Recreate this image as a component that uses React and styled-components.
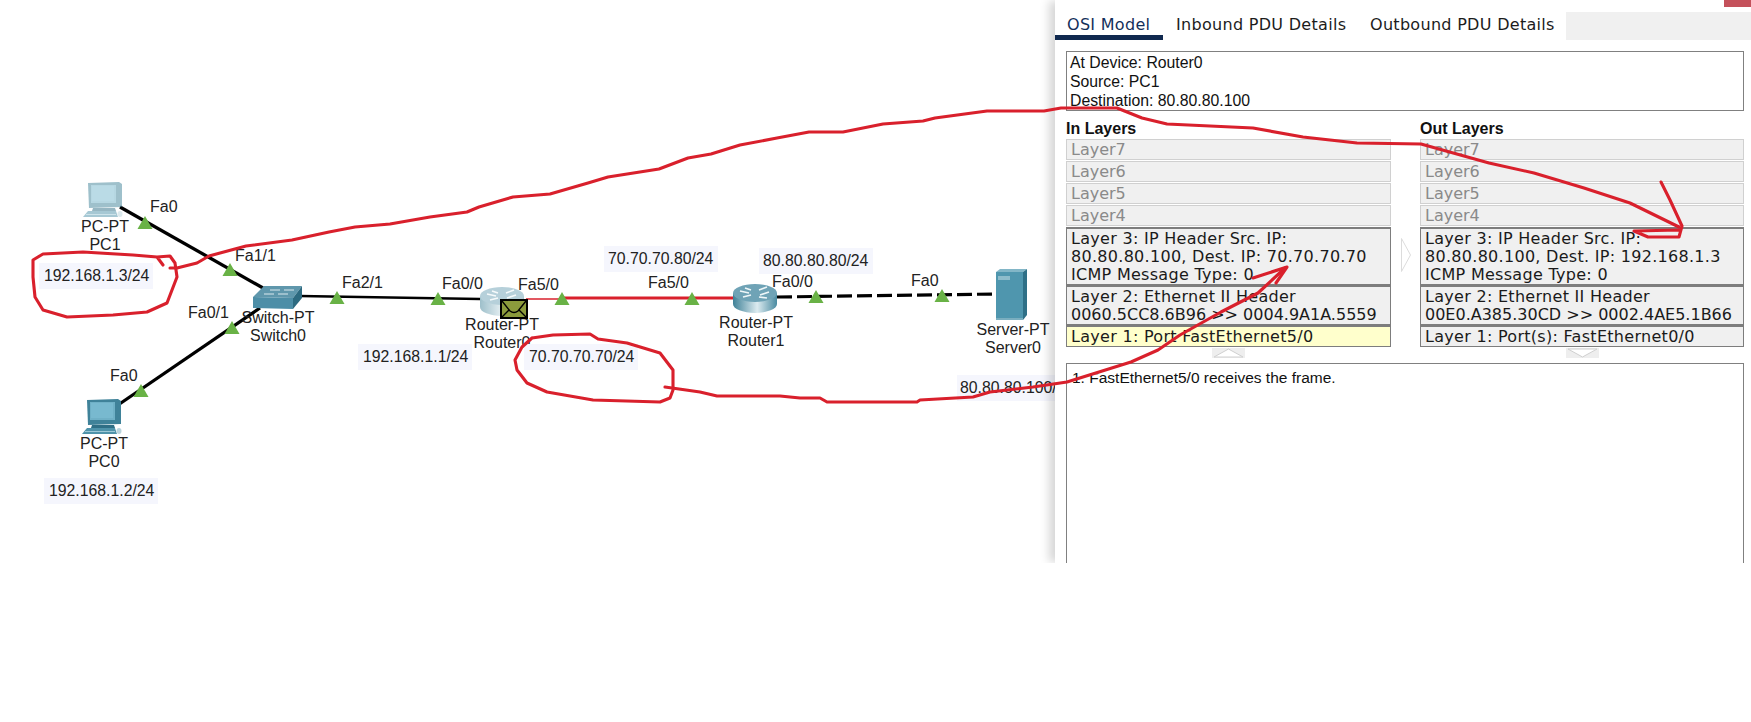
import React from "react";
import styled, { createGlobalStyle } from "styled-components";

const GlobalStyle = createGlobalStyle`
  html, body {
    margin: 0;
    padding: 0;
    background: #fff;
    font-family: "Liberation Sans", Arial, sans-serif;
  }
`;

const Page = styled.div`
  position: relative;
  display: flex;
  width: 1751px;
  height: 722px;
  overflow: hidden;
  background: #fff;
`;

/* ---------- topology canvas ---------- */

const Canvas = styled.section`
  position: relative;
  flex: 0 0 1055px;
  height: 563px;
  overflow: hidden;
  font-size: 16px;
  line-height: 18px;
  color: #222;
`;

const Wires = styled.svg`
  position: absolute;
  left: 0;
  top: 0;
  width: 1055px;
  height: 563px;
`;

const DeviceIcon = styled.svg`
  position: absolute;
  left: ${(p) => p.$x}px;
  top: ${(p) => p.$y}px;
  opacity: ${(p) => (p.$faded ? 0.5 : 1)};
`;

const Caption = styled.div`
  position: absolute;
  left: ${(p) => p.$x}px;
  top: ${(p) => p.$y}px;
  transform: translateX(-50%);
  text-align: center;
  white-space: nowrap;
`;

const PortLabel = styled.span`
  position: absolute;
  left: ${(p) => p.$x}px;
  top: ${(p) => p.$y - 9}px;
  white-space: nowrap;
`;

const AddressTag = styled.span`
  position: absolute;
  left: ${(p) => p.$x}px;
  top: ${(p) => p.$y}px;
  width: 114px;
  height: 26px;
  box-sizing: border-box;
  padding-left: ${(p) => p.$pad}px;
  font-size: 15.8px;
  line-height: 26px;
  background: #f5f6fd;
  white-space: nowrap;
`;

/* ---------- PDU panel ---------- */

const Panel = styled.section`
  position: relative;
  z-index: 1;
  flex: 0 0 696px;
  height: 563px;
  overflow: hidden;
  background: #fff;
  box-shadow: -7px 0 9px -1px rgba(0, 0, 0, 0.16);
  clip-path: inset(0 0 0 -20px);
`;

const TopStrip = styled.div`
  display: flex;
  justify-content: flex-end;
  height: 12px;
`;

const CloseCorner = styled.div`
  width: 27px;
  height: 7px;
  background: #c4515b;
`;

const TabBar = styled.div`
  display: flex;
  height: 28px;
  font-family: "DejaVu Sans", sans-serif;
  font-size: 16px;
  letter-spacing: 0.3px;
`;

const Tab = styled.div`
  box-sizing: border-box;
  flex: 0 0 ${(p) => p.$width}px;
  padding-left: ${(p) => p.$pad}px;
  line-height: 26px;
  white-space: nowrap;
  color: ${(p) => (p.$active ? "#14305a" : "#1c1c1c")};
  border-bottom: 5px solid ${(p) => (p.$active ? "#10294f" : "transparent")};
`;

const TabFiller = styled.div`
  flex: 1;
  background: #f0f0f0;
`;

const InfoBox = styled.div`
  box-sizing: border-box;
  height: 60px;
  margin: 11px 7px 0 11px;
  padding: 1px 3px;
  border: 1px solid #808080;
  font-size: 15.8px;
  line-height: 19px;
  color: #111;
`;

const LayerGrid = styled.div`
  display: grid;
  grid-template-columns: 325px 29px 324px;
  margin: 8px 7px 0 11px;
`;

const LayerColumn = styled.div`
  display: flex;
  flex-direction: column;
`;

const ColumnTitle = styled.h3`
  margin: 0;
  font-size: 16px;
  line-height: 20px;
  font-weight: bold;
  color: #111;
`;

const IdleLayer = styled.div`
  box-sizing: border-box;
  height: 21px;
  margin-bottom: 1px;
  padding-left: 4px;
  border: 1px solid #d0d0d0;
  background: #f0f0f0;
  font-family: "DejaVu Sans", sans-serif;
  font-size: 16px;
  line-height: 19px;
  color: #8a8a8a;

  &:nth-of-type(5) {
    margin-bottom: 0;
  }
`;

const ActiveLayer = styled.div`
  box-sizing: border-box;
  height: ${(p) => p.$height}px;
  padding: 1px 0 0 4px;
  border: 1px solid #7d7d7d;
  border-top-width: 2px;
  background: ${(p) => (p.$current ? "#ffffcc" : "#f0f0f0")};
  font-family: "DejaVu Sans", sans-serif;
  font-size: 16px;
  line-height: 18px;
  letter-spacing: 0.29px;
  color: #1a1a1a;
  white-space: nowrap;
`;

const HexLine = styled.span`
  letter-spacing: 0;
`;

const Chevron = styled.svg`
  display: block;
  margin: 119px 0 0 10px;
`;

const Toggle = styled.svg`
  display: block;
  margin: 1px auto 0;
`;

const LogBox = styled.div`
  box-sizing: border-box;
  height: 201px;
  margin: 5px 7px 0 11px;
  padding: 4px 5px;
  border: 1px solid #808080;
  border-bottom: 0;
  font-size: 15.5px;
  line-height: 19px;
  color: #111;
`;

/* ---------- hand drawn annotations ---------- */

const Scribble = styled.svg`
  position: absolute;
  left: 0;
  top: 0;
  z-index: 2;
  width: 1751px;
  height: 722px;
  pointer-events: none;
`;

const ports = [
  [145, 223],
  [230, 270],
  [232, 328],
  [141, 391],
  [337, 298],
  [438, 299],
  [562, 299],
  [692, 299],
  [816, 297],
  [942, 296],
];

const portLabels = [
  ["Fa0", 150, 207],
  ["Fa1/1", 235, 256],
  ["Fa0/1", 188, 313],
  ["Fa0", 110, 376],
  ["Fa2/1", 342, 283],
  ["Fa0/0", 442, 284],
  ["Fa5/0", 518, 285],
  ["Fa5/0", 648, 283],
  ["Fa0/0", 772, 282],
  ["Fa0", 911, 281],
];

const addresses = [
  ["192.168.1.3/24", 39, 263, 5],
  ["192.168.1.2/24", 44, 478, 5],
  ["192.168.1.1/24", 358, 344, 5],
  ["70.70.70.70/24", 524, 344, 5],
  ["70.70.70.80/24", 604, 246, 4],
  ["80.80.80.80/24", 759, 248, 4],
  ["80.80.80.100/", 957, 375, 3],
];

const captions = [
  ["PC-PT", "PC1", 105, 218],
  ["PC-PT", "PC0", 104, 435],
  ["Switch-PT", "Switch0", 278, 309],
  ["Router-PT", "Router0", 502, 316],
  ["Router-PT", "Router1", 756, 314],
  ["Server-PT", "Server0", 1013, 321],
];

const scribbles = [
  // circle around 192.168.1.3/24
  "M163 265 L157 257 L170 256 L175 263 L177 277 L172 290 L167 303 L147 312 L113 315 L67 317 L43 310 L35 297 L33 277 L33 260 L43 254 L83 252 L133 255 L157 257",
  // long line to the out layers
  "M170 268 L177 268 L197 263 L209 256 L246 246 L292 240 L329 232 L355 227 L390 224 L430 217 L467 212 L479 207 L513 197 L550 194 L588 183 L608 177 L659 169 L688 158 L711 154 L740 145 L777 138 L809 132 L843 132 L883 124 L923 121 L935 118 L987 111 L1044 111 L1061 108 L1117 108 L1142 118 L1167 124 L1253 128 L1303 137 L1357 143 L1421 144 L1489 163 L1534 173 L1584 188 L1630 203 L1679 227",
  // arrow head, out layers
  "M1661 182 L1670 200 L1682 226 L1679 237 L1648 237 L1634 231 L1679 230",
  // circle around 70.70.70.70/24
  "M532 338 L553 335 L590 334 L598 339 L627 343 L660 353 L673 370 L673 390 L670 398 L660 402 L593 400 L547 392 L527 383 L517 370 L515 360 L522 347 L532 338",
  // line to the in layers
  "M665 387 L700 392 L717 396 L780 396 L800 398 L820 398 L827 402 L917 402 L920 400 L973 397 L990 392 L1033 387 L1067 382 L1131 362 L1158 350 L1180 335 L1221 312 L1258 293 L1285 268",
  // arrow head, in layers
  "M1253 278 L1287 267 L1276 283",
];

function PcIcon({ x, y, faded }) {
  return (
    <DeviceIcon $x={x} $y={y} $faded={faded} width="40" height="37" viewBox="0 0 40 37">
      <polygon points="5,2 36,1 39,3 39,26 6,27" fill="#3f8299" />
      <rect x="8" y="4" width="25" height="18" fill="#6fb0c6" />
      <rect x="9" y="5" width="22" height="15" fill="#78b9cf" />
      <polygon points="10,27 32,27 33,30 9,30" fill="#2f6f86" />
      <polygon points="5,30 33,30 35,36 0,36" fill="#4f93aa" />
      <rect x="3" y="33" width="30" height="1" fill="#9cc8d6" />
      <ellipse cx="37" cy="33" rx="2.5" ry="3" fill="#b9d4dd" />
    </DeviceIcon>
  );
}

function SwitchIcon({ x, y }) {
  return (
    <DeviceIcon $x={x} $y={y} width="52" height="26" viewBox="0 0 52 26">
      <polygon points="1,12 12,1 50,1 41,13" fill="#5f97ac" />
      <polygon points="1,12 41,13 41,24 1,23" fill="#4d8ea7" />
      <polygon points="41,13 50,1 50,13 41,24" fill="#2d6a80" />
      <path d="M12 9 H22 M26 9 H36 M18 5 H28 M32 5 H42" stroke="#dbe9ee" strokeWidth="1" />
    </DeviceIcon>
  );
}

function RouterIcon({ id, x, y, faded }) {
  return (
    <DeviceIcon $x={x} $y={y} $faded={faded} width="46" height="31" viewBox="0 0 46 31">
      <defs>
        <linearGradient id={id} x1="0" x2="1" y1="0" y2="0">
          <stop offset="0" stopColor="#3f8197" />
          <stop offset="0.55" stopColor="#dcebf0" />
          <stop offset="1" stopColor="#4a8ba1" />
        </linearGradient>
      </defs>
      <path d="M1 10 V21 A22 9 0 0 0 45 21 V10 Z" fill={`url(#${id})`} />
      <ellipse cx="23" cy="10" rx="22" ry="9" fill="#6fa3b6" />
      <path
        d="M8 8 L17 10 M13 5 L19 7 M28 12 L37 9 M27 7 L35 4 M11 14 L19 12 M27 14 L35 15"
        stroke="#eef6f8"
        strokeWidth="1.6"
        fill="none"
      />
    </DeviceIcon>
  );
}

function ServerIcon({ x, y }) {
  return (
    <DeviceIcon $x={x} $y={y} width="31" height="51" viewBox="0 0 31 51">
      <polygon points="0,3 4,0 31,0 27,3" fill="#82b6c7" />
      <rect x="0" y="3" width="27" height="48" fill="#4f96ae" />
      <polygon points="27,3 31,0 31,46 27,51" fill="#2f7087" />
      <rect x="2" y="7" width="12" height="4" fill="#8dbccb" />
      <rect x="0" y="49" width="27" height="2" fill="#7aaebf" />
    </DeviceIcon>
  );
}

function PduEnvelope({ x, y }) {
  return (
    <DeviceIcon $x={x} $y={y} width="28" height="20" viewBox="0 0 28 20">
      <rect x="1" y="1" width="26" height="18" fill="#8b9a3c" stroke="#000" strokeWidth="2" />
      <path d="M2 2 L10 12 Q14 15 18 12 L26 2 M2 18 L9 11 M26 18 L19 11" stroke="#000" strokeWidth="1.4" fill="none" />
    </DeviceIcon>
  );
}

export default function App() {
  return (
    <Page>
      <GlobalStyle />
      <Canvas>
        <Wires viewBox="0 0 1055 563">
          <line x1="120" y1="207" x2="263" y2="288" stroke="#000" strokeWidth="3.3" />
          <line x1="118" y1="405" x2="260" y2="308" stroke="#000" strokeWidth="3.3" />
          <line x1="300" y1="296" x2="480" y2="299" stroke="#000" strokeWidth="2.6" />
          <line x1="526" y1="299" x2="562" y2="299" stroke="#d9202c" strokeWidth="1.4" />
          <line x1="562" y1="298" x2="733" y2="298" stroke="#d9202c" strokeWidth="3" />
          <line x1="777" y1="297" x2="996" y2="294" stroke="#000" strokeWidth="3.2" strokeDasharray="15 5" />
          {ports.map(([cx, cy]) => (
            <polygon
              key={`${cx}-${cy}`}
              points={`${cx - 7.5},${cy + 6} ${cx},${cy - 7} ${cx + 7.5},${cy + 6}`}
              fill="#69b246"
            />
          ))}
        </Wires>

        <PcIcon x={83} y={181} faded />
        <PcIcon x={82} y={398} />
        <SwitchIcon x={252} y={285} />
        <RouterIcon id="routerFade" x={479} y={286} faded />
        <RouterIcon id="routerFull" x={732} y={283} />
        <ServerIcon x={996} y={269} />

        {captions.map(([kind, name, x, y]) => (
          <Caption key={name} $x={x} $y={y}>
            {kind}
            <br />
            {name}
          </Caption>
        ))}
        {portLabels.map(([text, x, y]) => (
          <PortLabel key={`${x}-${y}`} $x={x} $y={y}>
            {text}
          </PortLabel>
        ))}
        {addresses.map(([text, x, y, pad]) => (
          <AddressTag key={text} $x={x} $y={y} $pad={pad}>
            {text}
          </AddressTag>
        ))}

        <PduEnvelope x={500} y={299} />
      </Canvas>

      <Panel>
        <TopStrip>
          <CloseCorner />
        </TopStrip>
        <TabBar>
          <Tab $active $width={108} $pad={12}>OSI Model</Tab>
          <Tab $width={195} $pad={13}>Inbound PDU Details</Tab>
          <Tab $width={208} $pad={12}>Outbound PDU Details</Tab>
          <TabFiller />
        </TabBar>

        <InfoBox>
          At Device: Router0
          <br />
          Source: PC1
          <br />
          Destination: 80.80.80.100
        </InfoBox>

        <LayerGrid>
          <LayerColumn>
            <ColumnTitle>In Layers</ColumnTitle>
            <IdleLayer>Layer7</IdleLayer>
            <IdleLayer>Layer6</IdleLayer>
            <IdleLayer>Layer5</IdleLayer>
            <IdleLayer>Layer4</IdleLayer>
            <ActiveLayer $height={58}>
              Layer 3: IP Header Src. IP:
              <br />
              80.80.80.100, Dest. IP: 70.70.70.70
              <br />
              ICMP Message Type: 0
            </ActiveLayer>
            <ActiveLayer $height={40}>
              Layer 2: Ethernet II Header
              <br />
              <HexLine>0060.5CC8.6B96 &gt;&gt; 0004.9A1A.5559</HexLine>
            </ActiveLayer>
            <ActiveLayer $height={22} $current>
              Layer 1: Port FastEthernet5/0
            </ActiveLayer>
            <Toggle width="33" height="10" viewBox="0 0 33 10">
              <rect width="33" height="10" fill="#eeeeee" />
              <polygon points="2,9 16.5,1 31,9" fill="#fff" stroke="#d0d0d0" />
            </Toggle>
          </LayerColumn>

          <Chevron width="10" height="34" viewBox="0 0 10 34">
            <polygon points="0.5,0.5 9.5,17 0.5,33.5" fill="#fff" stroke="#dcdcdc" />
          </Chevron>

          <LayerColumn>
            <ColumnTitle>Out Layers</ColumnTitle>
            <IdleLayer>Layer7</IdleLayer>
            <IdleLayer>Layer6</IdleLayer>
            <IdleLayer>Layer5</IdleLayer>
            <IdleLayer>Layer4</IdleLayer>
            <ActiveLayer $height={58}>
              Layer 3: IP Header Src. IP:
              <br />
              80.80.80.100, Dest. IP: 192.168.1.3
              <br />
              ICMP Message Type: 0
            </ActiveLayer>
            <ActiveLayer $height={40}>
              Layer 2: Ethernet II Header
              <br />
              <HexLine>00E0.A385.30CD &gt;&gt; 0002.4AE5.1B66</HexLine>
            </ActiveLayer>
            <ActiveLayer $height={22}>Layer 1: Port(s): FastEthernet0/0</ActiveLayer>
            <Toggle width="33" height="10" viewBox="0 0 33 10">
              <rect width="33" height="10" fill="#eeeeee" />
              <polygon points="2,1 16.5,9 31,1" fill="#fff" stroke="#d0d0d0" />
            </Toggle>
          </LayerColumn>
        </LayerGrid>

        <LogBox>1. FastEthernet5/0 receives the frame.</LogBox>
      </Panel>

      <Scribble viewBox="0 0 1751 722">
        {scribbles.map((d) => (
          <path
            key={d}
            d={d}
            fill="none"
            stroke="#d9202c"
            strokeWidth="3.1"
            strokeLinecap="round"
            strokeLinejoin="round"
          />
        ))}
      </Scribble>
    </Page>
  );
}
